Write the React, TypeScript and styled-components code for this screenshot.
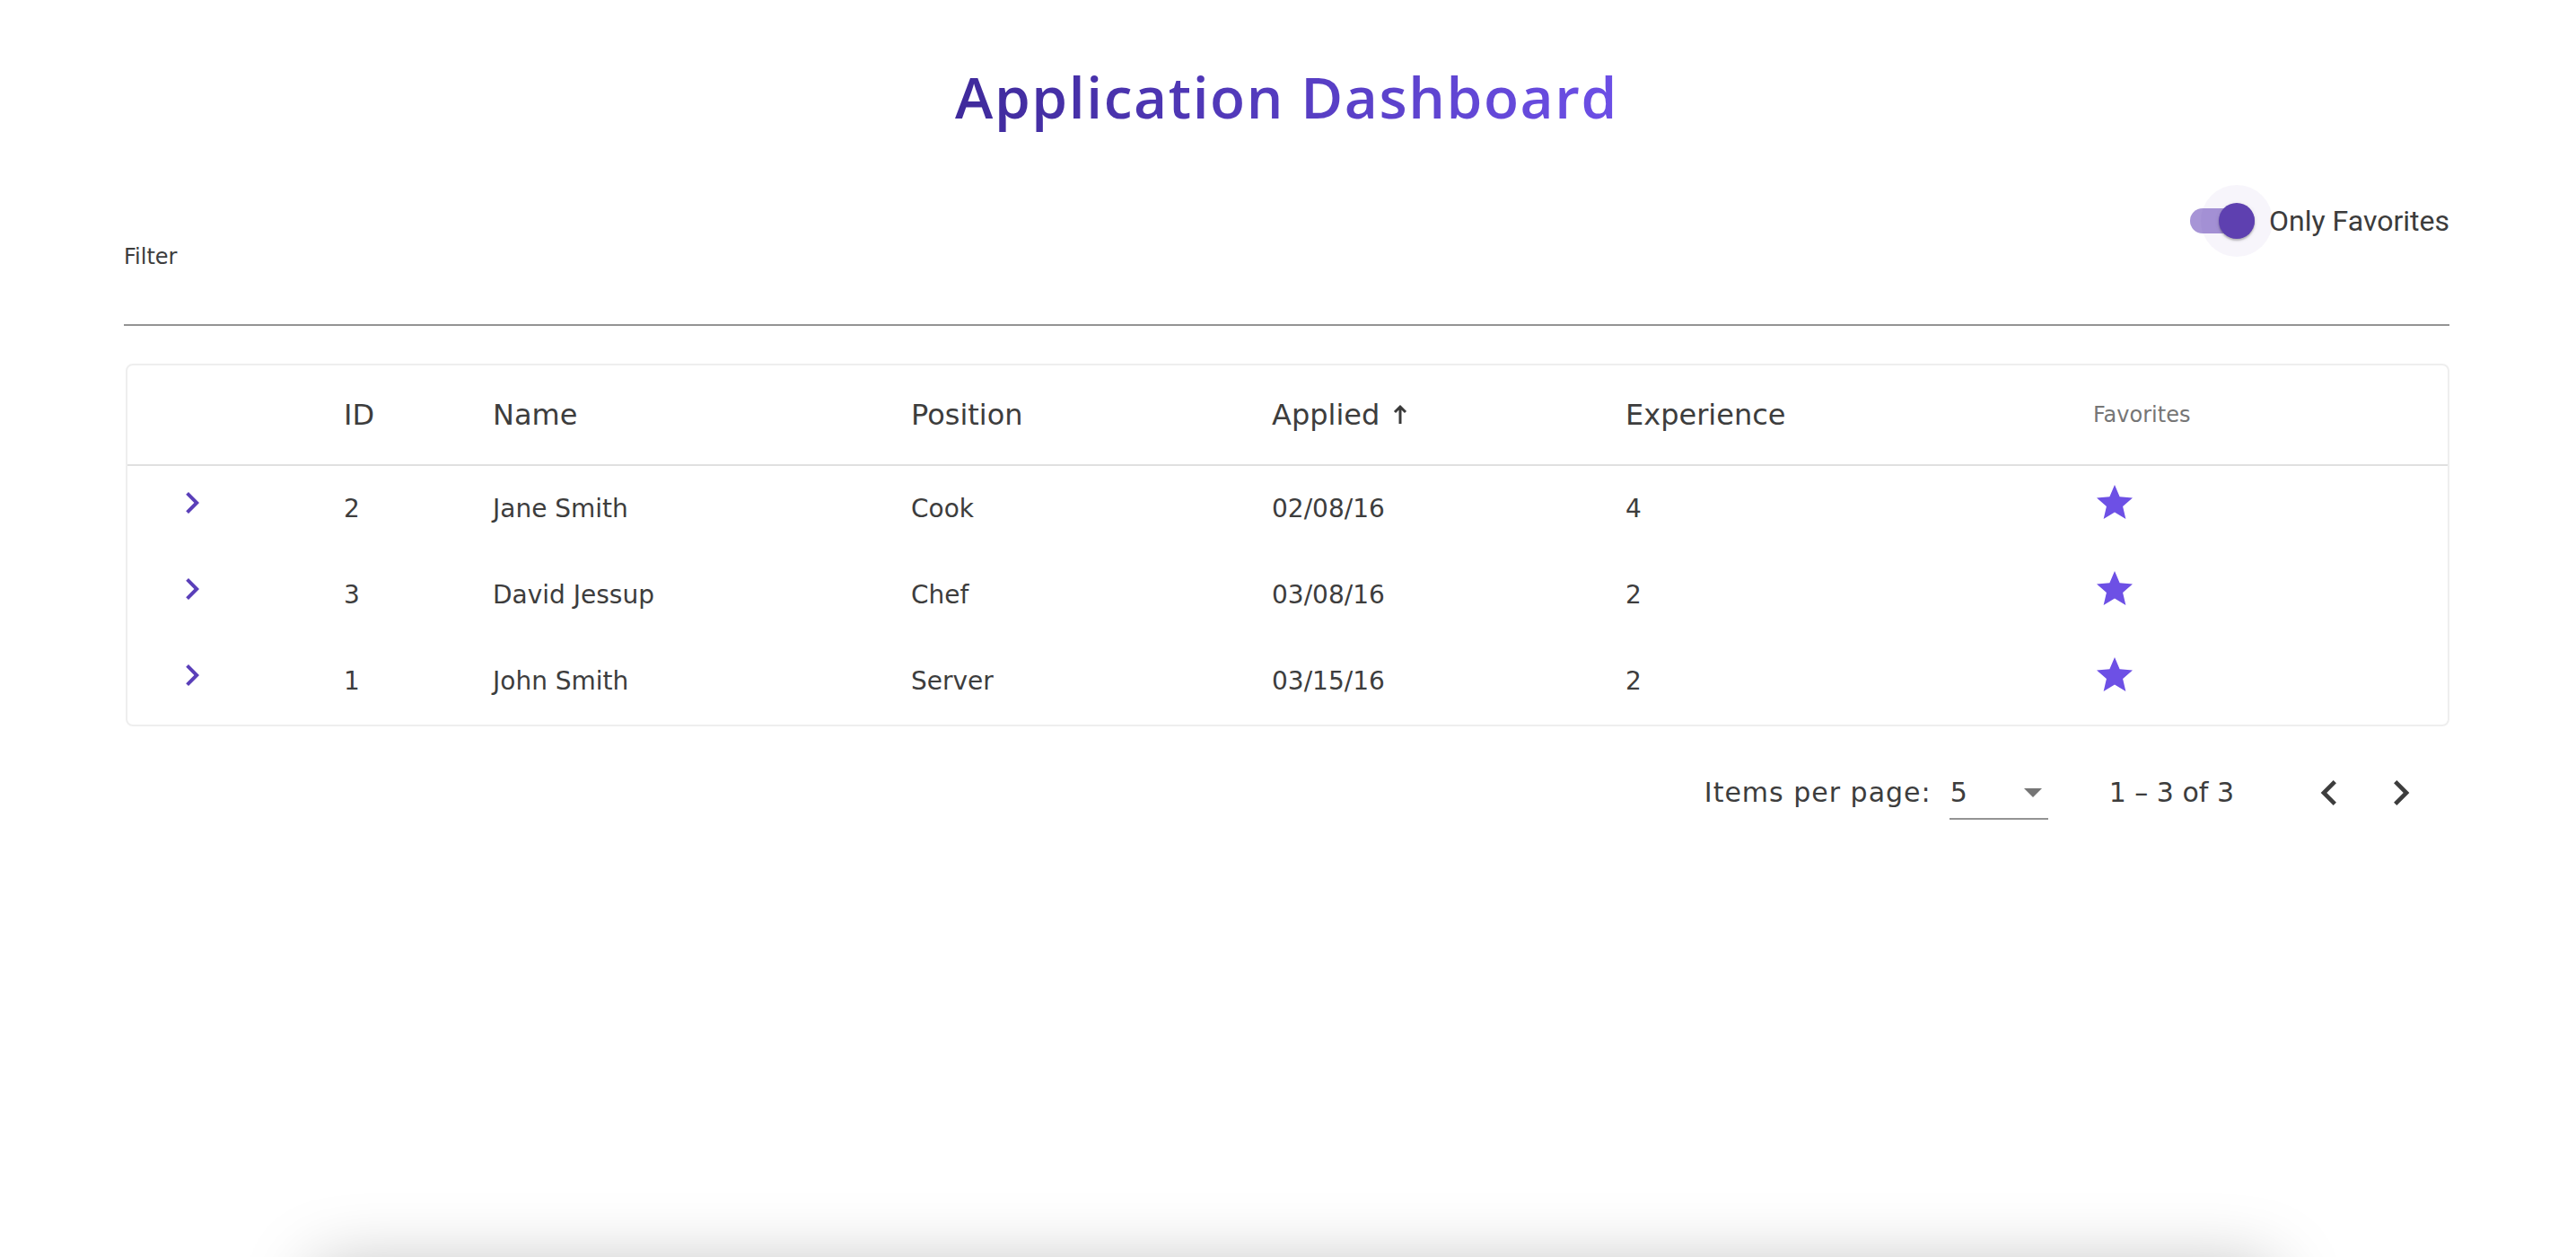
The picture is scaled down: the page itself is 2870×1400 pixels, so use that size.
import React from "react";
import styled, { createGlobalStyle } from "styled-components";

const GlobalStyle = createGlobalStyle`
  html, body { margin: 0; padding: 0; background: #ffffff; }
  * { box-sizing: border-box; }
`;

const Page = styled.div`
  padding: 0 141px 0 138px;
  font-family: "DejaVu Sans", "Noto Sans", sans-serif;
  color: #3d3d3d;
`;

const Heading = styled.h1`
  margin: 68px 0 0;
  text-align: center;
  font: 600 64px/80px "Open Sans", sans-serif;
  letter-spacing: 1.6px;
`;

const GradientText = styled.span`
  background: linear-gradient(90deg, #3f2a9b 0%, #6c4fe6 100%);
  -webkit-background-clip: text;
  background-clip: text;
  color: transparent;
`;

const ToggleRow = styled.div`
  margin-top: 72px;
  height: 52px;
  display: flex;
  justify-content: flex-end;
  align-items: center;
`;

const ToggleLabel = styled.label`
  display: flex;
  align-items: center;
  cursor: pointer;
`;

const Track = styled.span<{ $on: boolean }>`
  position: relative;
  flex: none;
  width: 72px;
  height: 28px;
  border-radius: 14px;
  background: ${(p) => (p.$on ? "#a795d6" : "#bdbdbd")};
`;

const Halo = styled.span`
  position: absolute;
  left: 12px;
  top: -26px;
  width: 80px;
  height: 80px;
  border-radius: 50%;
  background: rgba(103, 72, 190, 0.055);
`;

const Thumb = styled.span<{ $on: boolean }>`
  position: absolute;
  left: ${(p) => (p.$on ? 32 : 0)}px;
  top: -6px;
  width: 40px;
  height: 40px;
  border-radius: 50%;
  background: ${(p) => (p.$on ? "#5e40b0" : "#fafafa")};
  box-shadow: 0 2px 2px rgba(0, 0, 0, 0.22), 0 1px 5px rgba(0, 0, 0, 0.1);
`;

const ToggleText = styled.span`
  margin-left: 16px;
  font: 400 32px/36px Roboto, "Liberation Sans", sans-serif;
  color: #3c3c3c;
`;

const Field = styled.div`
  display: flex;
  flex-direction: column;
`;

const FieldLabel = styled.label`
  font-size: 24px;
  line-height: 28px;
  color: #3d3d3d;
`;

const FieldInput = styled.input`
  height: 63px;
  border: 0;
  border-bottom: 2px solid #949494;
  background: transparent;
  outline: none;
  padding: 0;
  font: inherit;
  font-size: 28px;
  color: #3d3d3d;
`;

const Card = styled.div`
  margin: 42px 0 0 2px;
  border: 2px solid #eeeeee;
  border-radius: 8px;
  background: #ffffff;
  overflow: hidden;
`;

const Row = styled.div<{ $header?: boolean }>`
  display: grid;
  grid-template-columns: 241px 166px 466px 402px 394px 521px 1fr;
  align-items: stretch;
  height: ${(p) => (p.$header ? 112 : 96)}px;
  border-bottom: ${(p) => (p.$header ? "2px solid #e0e0e0" : "none")};
`;

const HeadCell = styled.div<{ $small?: boolean }>`
  display: flex;
  align-items: center;
  font-size: ${(p) => (p.$small ? 24 : 32)}px;
  line-height: 1.2;
  color: ${(p) => (p.$small ? "#767676" : "#3d3d3d")};
  white-space: nowrap;
`;

const Cell = styled.div`
  display: flex;
  align-items: center;
  font-size: 28px;
  line-height: 1.2;
  color: #3d3d3d;
  white-space: nowrap;
`;

const IconCell = styled.div<{ $inset?: number }>`
  display: flex;
  align-items: center;
  padding-left: ${(p) => p.$inset ?? 0}px;
  padding-bottom: 14px;
`;

const SortArrow = styled.svg`
  margin-left: 15px;
  flex: none;
`;

const Paginator = styled.div`
  margin-top: 18px;
  height: 112px;
  display: flex;
  justify-content: flex-end;
  align-items: center;
  padding-right: 14px;
  font-size: 30px;
  line-height: 36px;
  color: #3d3d3d;
`;

const PageSizeLabel = styled.span`
  margin-right: 20px;
  white-space: nowrap;
  letter-spacing: 1px;
`;

const Select = styled.div`
  width: 110px;
  display: flex;
  align-items: center;
  justify-content: space-between;
  padding: 12px 7px 10px 1px;
  border-bottom: 2px solid #949494;
`;

const Caret = styled.span`
  width: 0;
  height: 0;
  border-left: 10px solid transparent;
  border-right: 10px solid transparent;
  border-top: 10px solid #757575;
`;

const RangeLabel = styled.span`
  margin: 0 66px 0 68px;
  white-space: nowrap;
`;

const NavButton = styled.button`
  width: 80px;
  height: 80px;
  border: 0;
  padding: 0;
  background: transparent;
  display: flex;
  align-items: center;
  justify-content: center;
  color: #3d3d3d;
  cursor: pointer;
`;

const Footer = styled.div`
  margin: 473px 0 0 213px;
  width: 2180px;
  height: 200px;
  background: #ffffff;
  border-radius: 8px;
  box-shadow: 0 0 80px rgba(0, 0, 0, 0.27);
`;

const ChevronRight = ({ size = 48, color = "#5a3fb9" }: { size?: number; color?: string }) => (
  <svg width={size} height={size} viewBox="0 0 24 24" fill={color}>
    <path d="M10 6L8.59 7.41 13.17 12l-4.58 4.59L10 18l6-6z" />
  </svg>
);

const ChevronLeft = ({ size = 56, color = "#3d3d3d" }: { size?: number; color?: string }) => (
  <svg width={size} height={size} viewBox="0 0 24 24" fill={color}>
    <path d="M15.41 7.41L14 6l-6 6 6 6 1.41-1.41L10.83 12z" />
  </svg>
);

const Star = () => (
  <svg width={48} height={48} viewBox="0 0 24 24" fill="#6d50e5">
    <path d="M12 17.27L18.18 21l-1.64-7.03L22 9.24l-7.19-.61L12 2 9.19 8.63 2 9.24l5.46 4.73L5.82 21z" />
  </svg>
);

type Applicant = { id: number; name: string; position: string; applied: string; experience: number };

const rows: Applicant[] = [
  { id: 2, name: "Jane Smith", position: "Cook", applied: "02/08/16", experience: 4 },
  { id: 3, name: "David Jessup", position: "Chef", applied: "03/08/16", experience: 2 },
  { id: 1, name: "John Smith", position: "Server", applied: "03/15/16", experience: 2 },
];

export default function App() {
  const [onlyFav, setOnlyFav] = React.useState(true);
  return (
    <>
      <GlobalStyle />
      <Page>
        <Heading>
          <GradientText>Application Dashboard</GradientText>
        </Heading>

        <ToggleRow>
          <ToggleLabel onClick={() => setOnlyFav((v) => !v)}>
            <Track $on={onlyFav}>
              {onlyFav && <Halo />}
              <Thumb $on={onlyFav} />
            </Track>
            <ToggleText>Only Favorites</ToggleText>
          </ToggleLabel>
        </ToggleRow>

        <Field>
          <FieldLabel htmlFor="filter">Filter</FieldLabel>
          <FieldInput id="filter" />
        </Field>

        <Card>
          <Row $header>
            <HeadCell />
            <HeadCell>ID</HeadCell>
            <HeadCell>Name</HeadCell>
            <HeadCell>Position</HeadCell>
            <HeadCell>
              Applied
              <SortArrow width={16} height={24} viewBox="0 0 16 24">
                <path d="M8 22V3M2 9l6-6 6 6" stroke="#3a3a3a" strokeWidth={3} fill="none" />
              </SortArrow>
            </HeadCell>
            <HeadCell>Experience</HeadCell>
            <HeadCell $small>Favorites</HeadCell>
          </Row>
          {rows.map((r) => (
            <Row key={r.id}>
              <IconCell $inset={48}>
                <ChevronRight />
              </IconCell>
              <Cell>{r.id}</Cell>
              <Cell>{r.name}</Cell>
              <Cell>{r.position}</Cell>
              <Cell>{r.applied}</Cell>
              <Cell>{r.experience}</Cell>
              <IconCell>
                <Star />
              </IconCell>
            </Row>
          ))}
        </Card>

        <Paginator>
          <PageSizeLabel>Items per page:</PageSizeLabel>
          <Select>
            <span>5</span>
            <Caret />
          </Select>
          <RangeLabel>1 – 3 of 3</RangeLabel>
          <NavButton aria-label="Previous page">
            <ChevronLeft />
          </NavButton>
          <NavButton aria-label="Next page">
            <ChevronRight size={56} color="#3d3d3d" />
          </NavButton>
        </Paginator>

        <Footer />
      </Page>
    </>
  );
}
